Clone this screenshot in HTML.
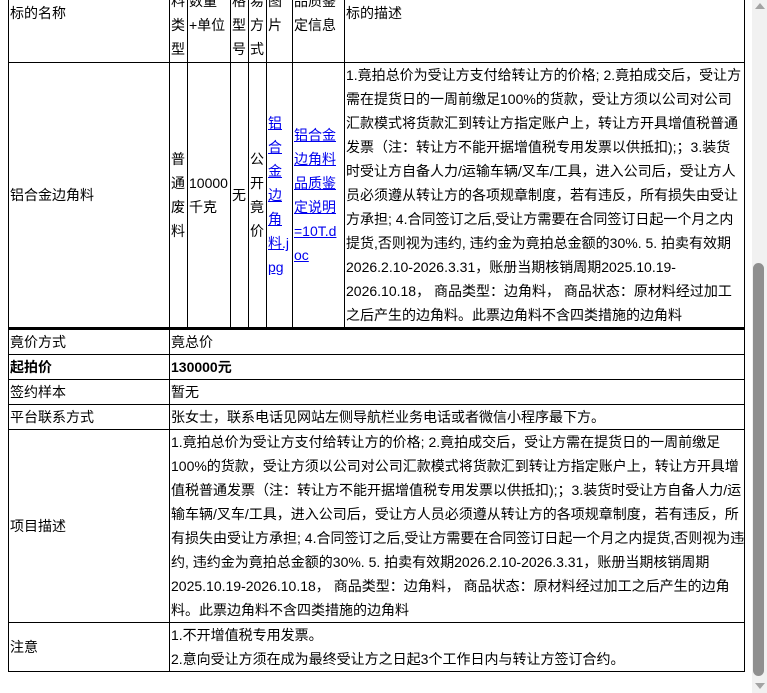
<!DOCTYPE html>
<html><head><meta charset="utf-8">
<style>
html,body{margin:0;padding:0;background:#fff;overflow:hidden;width:767px;height:693px;}
body{font-family:"Liberation Sans","Noto Sans CJK SC",sans-serif;font-size:14px;line-height:24px;color:#000;position:relative;}
#w{position:absolute;left:8px;top:-12px;width:736px;}
table{border-collapse:collapse;table-layout:fixed;width:736px;}
td{border:1px solid #000;padding:0 0 0 1px;vertical-align:middle;word-break:normal;overflow-wrap:anywhere;overflow:hidden;}
a{color:#0000ee;text-decoration:underline;}
#t1 tr.h{height:74px;}
#t1 tr.h td{vertical-align:top;}
#t1 tr.b{height:264px;}
#t2{border-top:2px solid #000;}
#t2 tr{height:25px;}
.nw{white-space:nowrap;}
.sb{position:absolute;left:752px;top:0;width:15px;height:693px;background:#f1f1f1;}
.th{position:absolute;left:753px;top:263px;width:11px;height:413px;background:#8f8f8f;border-radius:6px;}
.up{position:absolute;left:755px;top:3px;width:0;height:0;border-left:5px solid transparent;border-right:5px solid transparent;border-bottom:6px solid #a3a3a3;}
.dn{position:absolute;left:755px;top:683px;width:0;height:0;border-left:5px solid transparent;border-right:5px solid transparent;border-top:6px solid #a3a3a3;}
</style></head><body>
<div id="w">
<table id="t1">
<colgroup><col style="width:161px"><col style="width:18px"><col style="width:43px"><col style="width:18px"><col style="width:18px"><col style="width:26px"><col style="width:52px"><col style="width:400px"></colgroup>
<tr class="h"><td><div style="margin-top:12px">标的名称</div></td><td>料类型</td><td>数量+单位</td><td>格型号</td><td>易方式</td><td>图片</td><td>品质鉴定信息</td><td><div style="margin-top:12px">标的描述</div></td></tr>
<tr class="b"><td>铝合金边角料</td><td>普通废料</td><td>10000千克</td><td>无</td><td>公开竟价</td><td><a>铝合金边角料.jpg</a></td><td><a>铝合金边角料品质鉴定说明=10T.doc</a></td><td>1.竟拍总价为受让方支付给转让方的价格; 2.竟拍成交后，受让方需在提货日的一周前缴足100%的货款，受让方须以公司对公司汇款模式将货款汇到转让方指定账户上，转让方开具增值税普通发票（注：转让方不能开据增值税专用发票以供抵扣);；3.装货时受让方自备人力/运输车辆/叉车/工具，进入公司后，受让方人员必须遵从转让方的各项规章制度，若有违反，所有损失由受让方承担; 4.合同签订之后,受让方需要在合同签订日起一个月之内提货,否则视为违约, 违约金为竟拍总金额的30%. 5. 拍卖有效期2026.2.10-2026.3.31，账册当期核销周期2025.10.19-2026.10.18， 商品类型：边角料， 商品状态：原材料经过加工之后产生的边角料。此票边角料不含四类措施的边角料</td></tr>
</table>
<table id="t2">
<colgroup><col style="width:161px"><col style="width:575px"></colgroup>
<tr><td>竟价方式</td><td>竟总价</td></tr>
<tr><td><b>起拍价</b></td><td><b>130000元</b></td></tr>
<tr><td>签约样本</td><td>暂无</td></tr>
<tr><td>平台联系方式</td><td>张女士，联系电话见网站左侧导航栏业务电话或者微信小程序最下方。</td></tr>
<tr><td>项目描述</td><td class="nw">1.竟拍总价为受让方支付给转让方的价格; 2.竟拍成交后，受让方需在提货日的一周前缴足<br>100%的货款，受让方须以公司对公司汇款模式将货款汇到转让方指定账户上，转让方开具增<br>值税普通发票（注：转让方不能开据增值税专用发票以供抵扣);；3.装货时受让方自备人力/运<br>输车辆/叉车/工具，进入公司后，受让方人员必须遵从转让方的各项规章制度，若有违反，所<br>有损失由受让方承担; 4.合同签订之后,受让方需要在合同签订日起一个月之内提货,否则视为违<br>约, 违约金为竟拍总金额的30%. 5. 拍卖有效期2026.2.10-2026.3.31，账册当期核销周期<br>2025.10.19-2026.10.18， 商品类型：边角料， 商品状态：原材料经过加工之后产生的边角<br>料。此票边角料不含四类措施的边角料</td></tr>
<tr><td>注意</td><td>1.不开增值税专用发票。<br>2.意向受让方须在成为最终受让方之日起3个工作日内与转让方签订合约。</td></tr>
</table>
</div>
<div class="sb"></div><div class="th"></div><div class="up"></div><div class="dn"></div>
</body></html>
